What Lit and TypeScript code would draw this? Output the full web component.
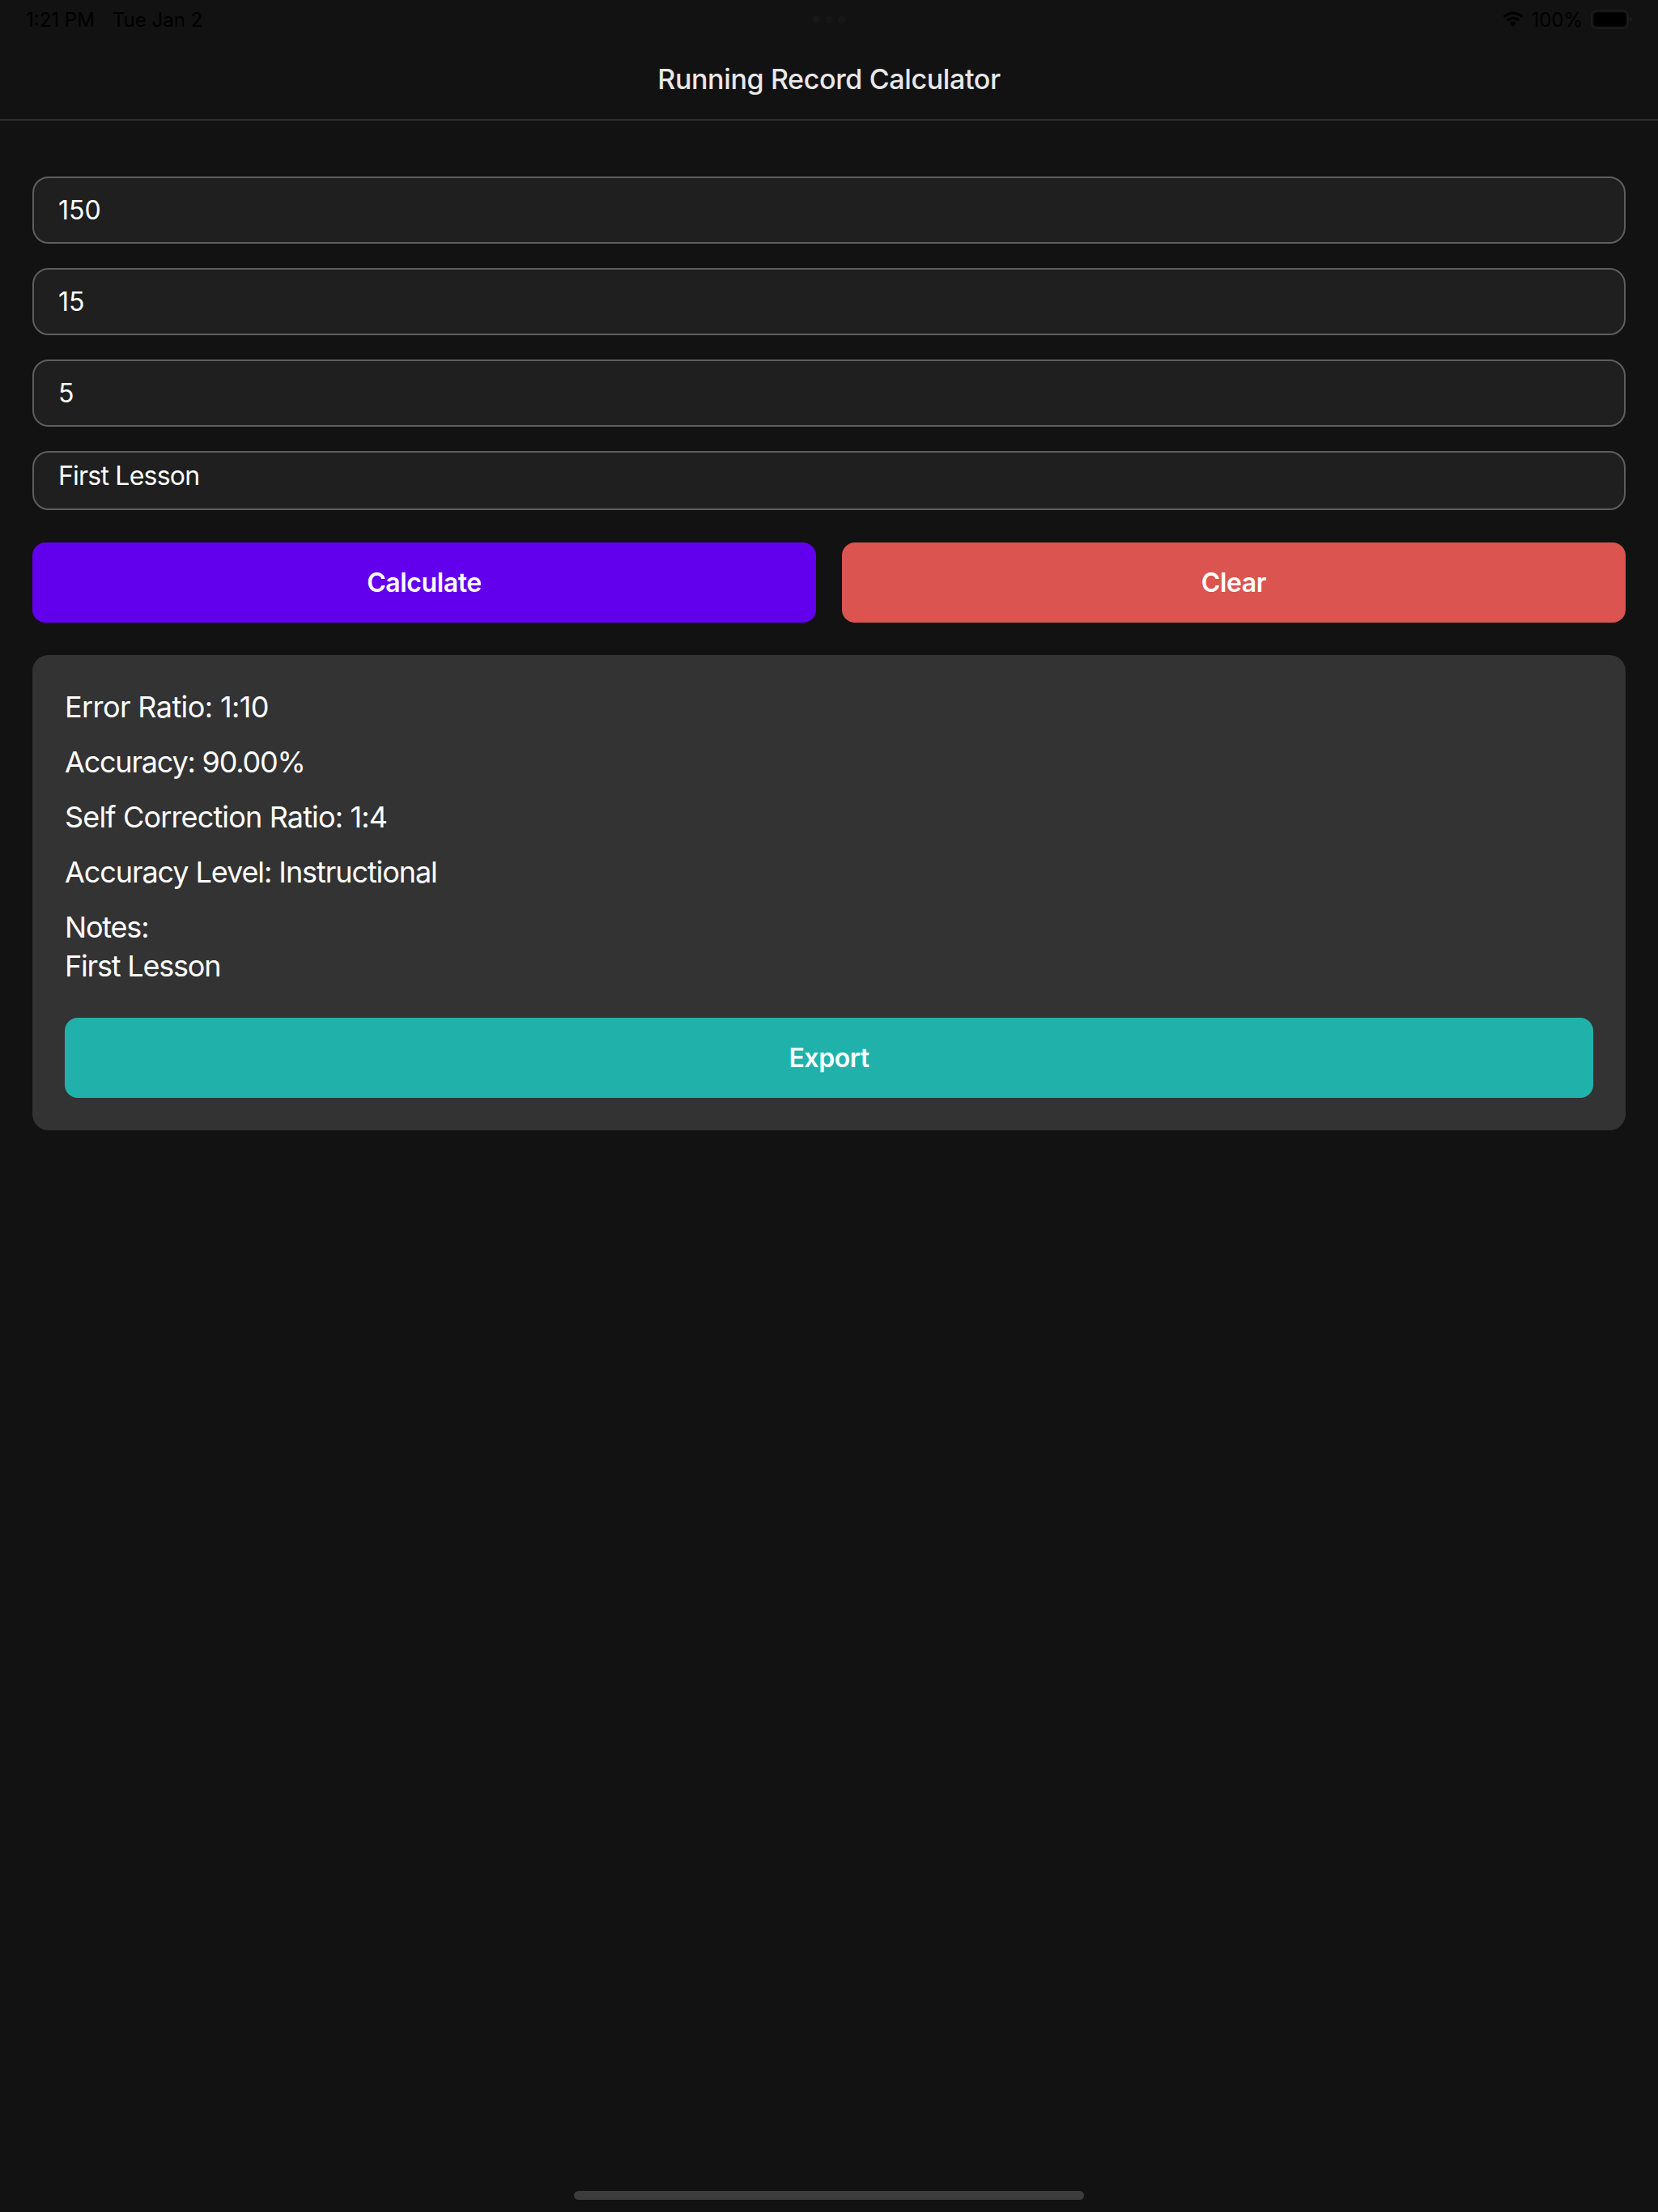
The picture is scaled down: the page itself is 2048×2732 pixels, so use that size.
import { LitElement, html, css } from "lit";
import { customElement } from "lit/decorators.js";

@customElement("app-root")
export class AppRoot extends LitElement {
  static styles = css`
    :host { display: block; width: 2048px; height: 2732px; background: #121212; font-family: Inter, "Liberation Sans", sans-serif; color: #fff; position: relative; overflow: hidden; }
    .status { height: 48px; display: flex; align-items: center; justify-content: space-between; padding: 0 31px 0 32px; box-sizing: border-box; color: #000; font-size: 24px; position: relative; }
    .status .left { display: flex; gap: 22px; }
    .status .right { display: flex; align-items: center; gap: 8px; }
    .dots { position: absolute; left: 1003px; top: 19px; display: flex; gap: 6px; }
    .dots i { width: 10px; height: 10px; border-radius: 50%; background: #171717; display: block; }
    .header { height: 101px; box-sizing: border-box; border-bottom: 2px solid #2e2e2e; display: flex; align-items: center; justify-content: center; font-size: 34px; font-weight: 500; letter-spacing: -0.36px; color: #e8e8e8; padding-bottom: 1px; }
    .content { padding: 69px 40px 0; display: flex; flex-direction: column; }
    .field { height: 83px; box-sizing: border-box; border: 2px solid #5e5e5e; border-radius: 20px; background: #1f1f1f; padding: 0 30px; display: flex; align-items: center; font-size: 32px; font-weight: 375; margin-bottom: 30px; }
    .notes { height: 73px; align-items: flex-start; padding-top: 9px; margin-bottom: 40px; letter-spacing: -0.78px; }
    .buttons { display: flex; gap: 32px; margin-bottom: 40px; }
    .btn { flex: 1; height: 99px; border-radius: 16px; display: flex; align-items: center; justify-content: center; font-size: 32px; font-weight: 600; letter-spacing: -0.4px; }
    .calc { background: #6200ee; }
    .clear { background: #db544f; }
    .card { background: #333333; border-radius: 20px; padding: 40px; height: 587px; box-sizing: border-box; display: flex; flex-direction: column; }
    .card p { margin: 0 0 20px; font-size: 36px; font-weight: 375; line-height: 48px; }
    .card p.error { letter-spacing: -0.6px; }
    .card p.accuracy { letter-spacing: -1.2px; }
    .card p.self { letter-spacing: -0.85px; }
    .card p.level { letter-spacing: -1.08px; }
    .card p.last { margin-bottom: 40px; letter-spacing: -1.2px; }
    .export { background: #20b2aa; flex: none; }
    .home { position: absolute; left: 709px; top: 2706px; width: 630px; height: 11px; border-radius: 6px; background: #3c3c3c; }
  `;

  render() {
    return html`
      <div class="status">
        <div class="left"><span>1:21 PM</span><span>Tue Jan 2</span></div>
        <div class="dots"><i></i><i></i><i></i></div>
        <div class="right">
          <svg width="28" height="20" viewBox="0 0 28 20"><path fill="#000" d="M14 4c4 0 7.500 1.500 10.300 4.100L26.500 5.800C23.200 2.500 18.800.5 14 .5S4.800 2.500 1.500 5.800l2.200 2.300C6.500 5.500 10 4 14 4zm0 6c2.400 0 4.600.9 6.200 2.400l2.200-2.300C20.200 8 17.300 6.800 14 6.800S7.800 8 5.600 10.100l2.200 2.300C9.400 10.900 11.600 10 14 10zm0 2.800c-1.700 0-3.100.6-4.200 1.600L14 19l4.200-4.600c-1.100-1-2.500-1.600-4.200-1.600z"/></svg>
          <span>100%</span>
          <svg width="52" height="26" viewBox="0 0 52 26" style="margin-left:2px"><rect x="1" y="2" width="45" height="22" rx="6" fill="none" stroke="#1c1c1c" stroke-width="2"/><rect x="3.500" y="4.500" width="40" height="17" rx="4" fill="#000"/><path d="M48 10c2 .5 3 1.500 3 3s-1 2.500-3 3z" fill="#1c1c1c"/></svg>
        </div>
      </div>
      <div class="header">Running Record Calculator</div>
      <div class="content">
        <div class="field">150</div>
        <div class="field">15</div>
        <div class="field">5</div>
        <div class="field notes">First Lesson</div>
        <div class="buttons">
          <div class="btn calc">Calculate</div>
          <div class="btn clear">Clear</div>
        </div>
        <div class="card">
          <p class="error">Error Ratio: 1:10</p>
          <p class="accuracy">Accuracy: 90.00%</p>
          <p class="self">Self Correction Ratio: 1:4</p>
          <p class="level">Accuracy Level: Instructional</p>
          <p class="last">Notes:<br />First Lesson</p>
          <div class="btn export">Export</div>
        </div>
      </div>
      <div class="home"></div>
    `;
  }
}
